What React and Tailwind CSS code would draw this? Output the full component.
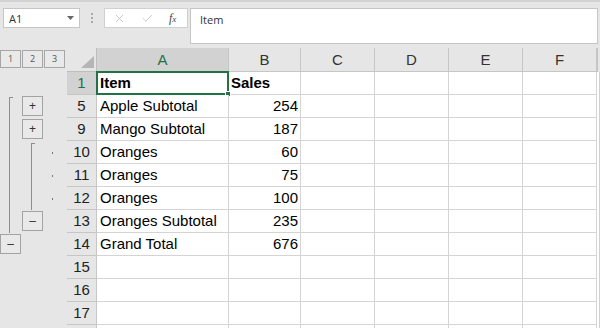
import { X, Check } from 'lucide-react'

const cols = [
  { key: 'A', w: 'w-[132px]' },
  { key: 'B', w: 'w-[72px]' },
  { key: 'C', w: 'w-[74px]' },
  { key: 'D', w: 'w-[74px]' },
  { key: 'E', w: 'w-[74px]' },
  { key: 'F', w: 'w-[74px]' },
]

const rows = [
  { n: 1, a: 'Item', b: 'Sales', head: true },
  { n: 5, a: 'Apple Subtotal', b: '254', l1: 'start', l2: 'plus' },
  { n: 9, a: 'Mango Subtotal', b: '187', l1: 'line', l2: 'plus' },
  { n: 10, a: 'Oranges', b: '60', l1: 'line', l2: 'start', dot: true },
  { n: 11, a: 'Oranges', b: '75', l1: 'line', l2: 'line', dot: true },
  { n: 12, a: 'Oranges', b: '100', l1: 'line', l2: 'line', dot: true },
  { n: 13, a: 'Oranges Subtotal', b: '235', l1: 'line', l2: 'minus' },
  { n: 14, a: 'Grand Total', b: '676', l1: 'minus' },
  { n: 15 },
  { n: 16 },
  { n: 17 },
  { n: 18, hideNum: true },
]

function OutlineBtn({ children }) {
  return (
    <div className="w-[21px] h-[20px] mt-[1px] border border-[#a3a3a3] bg-[#e9e9e9] flex items-center justify-center text-[12px] leading-none text-[#333]">
      {children}
    </div>
  )
}

function Level({ kind }) {
  if (kind === 'plus') return <OutlineBtn>+</OutlineBtn>
  if (kind === 'minus') return <OutlineBtn>–</OutlineBtn>
  if (kind === 'start') return <div className="ml-[9px] mt-[2px] w-[4px] h-[21px] border-l border-t border-[#8c8c8c]" />
  if (kind === 'line') return <div className="ml-[9px] w-[1px] h-[23px] bg-[#8c8c8c]" />
  return null
}

export default function App() {
  const font = { fontFamily: '"Liberation Sans", Arial, sans-serif' }

  return (
    <div className="w-[600px] h-[328px] overflow-hidden bg-[#e6e6e6] flex flex-col" style={font}>
      {/* Formula bar */}
      <div className="h-[48px] shrink-0 border-t-2 border-[#d2d2d2] flex items-start pt-[6px] pl-[3px] pr-[2px]">
        <div className="w-[77px] h-[20px] bg-white border border-[#c6c6c6] flex items-center justify-between pl-[5px] pr-[5px]" style={{ fontFamily: '"Open Sans", sans-serif' }}>
          <span className="text-[11px] leading-none text-[#333]">A1</span>
          <svg width="7" height="4" viewBox="0 0 7 4"><polygon points="0,0 7,0 3.5,4" fill="#666" /></svg>
        </div>
        <div className="w-[24px] h-[20px] flex flex-col items-center justify-center gap-[2px]">
          <span className="w-[2px] h-[2px] bg-[#aaa]" />
          <span className="w-[2px] h-[2px] bg-[#aaa]" />
          <span className="w-[2px] h-[2px] bg-[#aaa]" />
        </div>
        <div className="w-[84px] h-[20px] bg-white border border-[#d0d0d0] flex items-center pl-[8px] gap-[15px]">
          <X size={13} strokeWidth={1.3} className="text-[#b3b3b3]" />
          <Check size={13} strokeWidth={1.3} className="text-[#b3b3b3]" />
          <span className="text-[12px] italic text-[#444] leading-none" style={{ fontFamily: '"Liberation Serif", serif' }}>f<span className="text-[9px]">x</span></span>
        </div>
        <div className="ml-[2px] flex-1 h-[36px] bg-white border border-[#c6c6c6] pl-[9px] pt-[4px]" style={{ fontFamily: '"Open Sans", sans-serif' }}>
          <span className="block text-[11px] leading-[14px] text-[#333]">Item</span>
        </div>
      </div>

      {/* Column headers */}
      <div className="h-[24px] shrink-0 flex">
        <div className="w-[67px] flex items-start pt-[2px] gap-[1px]">
          {['1', '2', '3'].map((l) => (
            <div key={l} className="w-[21px] h-[18px] border border-[#a6a6a6] bg-[#e9e9e9] flex items-center justify-center text-[9px] text-[#555]" style={{ fontFamily: '"Open Sans", sans-serif' }}>
              {l}
            </div>
          ))}
        </div>
        <div className="w-[30px] border-r border-b border-[#bdbdbd] flex items-end justify-end pr-[2px] pb-[3px]">
          <svg width="13" height="12" viewBox="0 0 13 12"><polygon points="13,0 13,12 0,12" fill="#b5b5b5" /></svg>
        </div>
        {cols.map((c) => (
          <div
            key={c.key}
            className={`${c.w} border-r border-b flex items-center justify-center text-[15px] pt-[2px] ${
              c.key === 'A'
                ? 'bg-[#d2d2d2] text-[#217346] border-r-[#c6c6c6] border-b-[#217346]'
                : 'text-[#333] border-[#c6c6c6]'
            }`}
          >
            {c.key}
          </div>
        ))}
        <div className="flex-1 border-l border-[#c6c6c6]" />
      </div>

      {/* Rows */}
      {rows.map((r) => (
        <div key={r.n} className="h-[23px] shrink-0 flex">
          <div className="w-[67px] flex">
            <div className="w-[22px]"><Level kind={r.l1} /></div>
            <div className="w-[22px]"><Level kind={r.l2} /></div>
            <div className="w-[23px] flex items-center pl-[8px]">
              {r.dot && <span className="w-[1px] h-[2px] bg-[#777]" />}
            </div>
          </div>
          <div
            className={`w-[30px] border-r border-b flex items-center justify-center text-[15px] pt-[1px] ${
              r.head
                ? 'bg-[#d2d2d2] text-[#217346] border-b-[#c6c6c6] border-r-[#217346]'
                : 'text-[#222] border-[#c6c6c6]'
            }`}
          >
            {r.hideNum ? '' : r.n}
          </div>
          <div className="w-[132px] relative bg-white border-r border-b border-[#d4d4d4] flex items-center pl-[3px] pt-[1px] text-[15px] text-black">
            <span className={r.head ? 'font-bold' : ''}>{r.a}</span>
            {r.head && (
              <div className="absolute -left-[1px] -top-[1px] -right-[1px] -bottom-[1px] border-2 border-[#217346]">
                <div className="absolute -right-[4px] -bottom-[4px] w-[6px] h-[6px] bg-[#217346] border border-white" />
              </div>
            )}
          </div>
          <div className={`w-[72px] bg-white border-r border-b border-[#d4d4d4] flex items-center pt-[1px] text-[15px] text-black ${r.head ? 'justify-start pl-[2px] font-bold' : 'justify-end pr-[2px]'}`}>
            {r.b}
          </div>
          {cols.slice(2).map((c) => (
            <div key={c.key} className={`${c.w} bg-white border-r border-b border-[#d4d4d4]`} />
          ))}
          <div className="flex-1 bg-white border-r border-[#cfcfcf]" />
        </div>
      ))}
    </div>
  )
}
